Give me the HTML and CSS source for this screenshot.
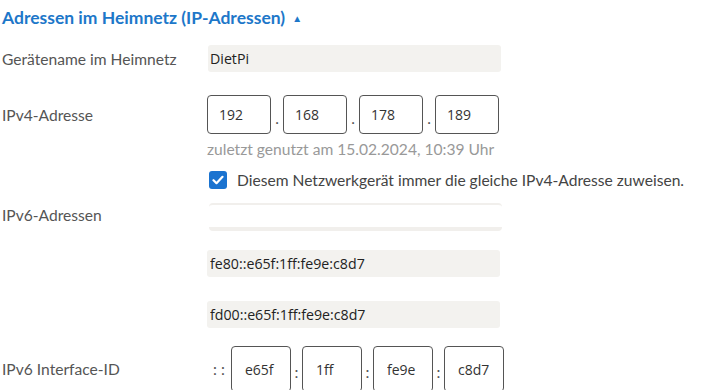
FILE: index.html
```html
<!DOCTYPE html>
<html lang="de">
  <head>
    <meta charset="UTF-8" />
    <title>Adressen im Heimnetz</title>
    <link rel="stylesheet" href="styles.css">
  </head>
  <body>
    <div class="section">
      <h2 class="section-title">Adressen im Heimnetz (IP-Adressen) <span class="toggle">&#9650;</span></h2>

      <!-- Gerätename -->
      <div class="row row-name">
        <label class="label" for="devname">Gerätename im Heimnetz</label>
        <input class="field" id="devname" type="text" value="DietPi" readonly />
      </div>

      <!-- IPv4 -->
      <div class="row row-ipv4">
        <label class="label">IPv4-Adresse</label>
        <div class="octets">
          <input class="octet" type="text" value="192" />
          <span class="sep">.</span>
          <input class="octet" type="text" value="168" />
          <span class="sep">.</span>
          <input class="octet" type="text" value="178" />
          <span class="sep">.</span>
          <input class="octet" type="text" value="189" />
        </div>
      </div>
      <div class="row">
        <span class="label"></span>
        <div class="hint">zuletzt genutzt am 15.02.2024, 10:39 Uhr</div>
      </div>
      <div class="row row-check">
        <span class="label"></span>
        <label class="check">
          <span class="checkbox">
            <svg width="12" height="10" viewBox="0 0 12 10"><path d="M1.5 5.2 4.5 8.2 10.5 1.8" fill="none" stroke="#fff" stroke-width="2.2" stroke-linecap="round" stroke-linejoin="round"/></svg>
          </span>
          Diesem Netzwerkgerät immer die gleiche IPv4-Adresse zuweisen.
        </label>
      </div>

      <!-- IPv6 -->
      <div class="row row-ipv6">
        <label class="label">IPv6-Adressen</label>
        <div class="empty-field"></div>
      </div>
      <div class="row row-addr">
        <span class="label"></span>
        <input class="field field-v6" type="text" value="fe80::e65f:1ff:fe9e:c8d7" readonly />
      </div>
      <div class="row row-addr2">
        <span class="label"></span>
        <input class="field field-v6" type="text" value="fd00::e65f:1ff:fe9e:c8d7" readonly />
      </div>

      <div class="row row-iid">
        <label class="label">IPv6 Interface-ID</label>
        <div class="octets iid">
          <span class="prefix">: :</span>
          <input class="octet hex" type="text" value="e65f" />
          <span class="sep">:</span>
          <input class="octet hex" type="text" value="1ff" />
          <span class="sep">:</span>
          <input class="octet hex" type="text" value="fe9e" />
          <span class="sep">:</span>
          <input class="octet hex" type="text" value="c8d7" />
        </div>
      </div>
    </div>
  </body>
</html>
```

FILE: styles.css
```css
body {
  margin: 0;
  padding: 0 0 0 2px;
  background: #fff;
  font-family: "Source Sans Pro", Lato, "Open Sans", sans-serif;
  font-size: 15.6px;
  color: #555;
  overflow: hidden;
}

.section-title {
  margin: 0;
  padding-top: 7px;
  height: 25px;
  font-size: 17.5px;
  font-weight: 700;
  color: #1d77c9;
}

.toggle {
  font-size: 10px;
  position: relative;
  top: -2px;
  margin-left: 3px;
}

.row {
  display: flex;
  align-items: center;
}

.label {
  width: 205px;
  flex-shrink: 0;
}

.field {
  box-sizing: border-box;
  width: 293px;
  height: 27px;
  border: none;
  border-radius: 3px;
  background: #f3f2ef;
  padding: 0 0 0 3px;
  font-family: "Open Sans", sans-serif;
  font-size: 14.2px;
  color: #222;
  outline: none;
}

.row-name .field {
  margin-left: 1px;
  padding-left: 2px;
}

.row-name {
  margin-top: 13px;
}

.row-ipv4 {
  margin-top: 23px;
}

.octets {
  display: flex;
  align-items: center;
}

.octet {
  box-sizing: border-box;
  width: 64px;
  height: 39px;
  border: 1px solid #555;
  border-radius: 4px;
  padding: 0 0 0 11px;
  font-family: "Open Sans", sans-serif;
  font-size: 14px;
  color: #333;
  outline: none;
}

.sep {
  width: 12px;
  text-align: center;
  color: #555;
  padding-top: 6px;
}

.hint {
  margin-top: 6px;
  color: #999;
}

.row-check {
  margin-top: 13px;
}

.check {
  display: flex;
  align-items: center;
  gap: 10px;
  color: #444;
  margin-left: 2px;
}

.checkbox {
  width: 18px;
  height: 18px;
  border-radius: 3px;
  background: #1a73d0;
  display: flex;
  align-items: center;
  justify-content: center;
}

.row-ipv6 {
  margin-top: 10px;
}

.empty-field {
  box-sizing: border-box;
  width: 293px;
  height: 28px;
  margin-left: 2px;
  margin-top: 4px;
  border-top: 2px solid #f1efec;
  border-bottom: 4px solid #f1efec;
  border-radius: 4px;
}

.row-addr {
  margin-top: 19px;
}

.row-addr2 {
  margin-top: 24px;
}

.row-iid {
  margin-top: 18px;
}

.iid {
  margin-left: 2px;
}

.iid .prefix {
  width: 22px;
  padding-left: 4px;
  box-sizing: border-box;
  color: #555;
}

.iid .sep {
  width: 11px;
}

.octet.hex {
  width: 60px;
  height: 46px;
  padding-left: 13px;
}
```
